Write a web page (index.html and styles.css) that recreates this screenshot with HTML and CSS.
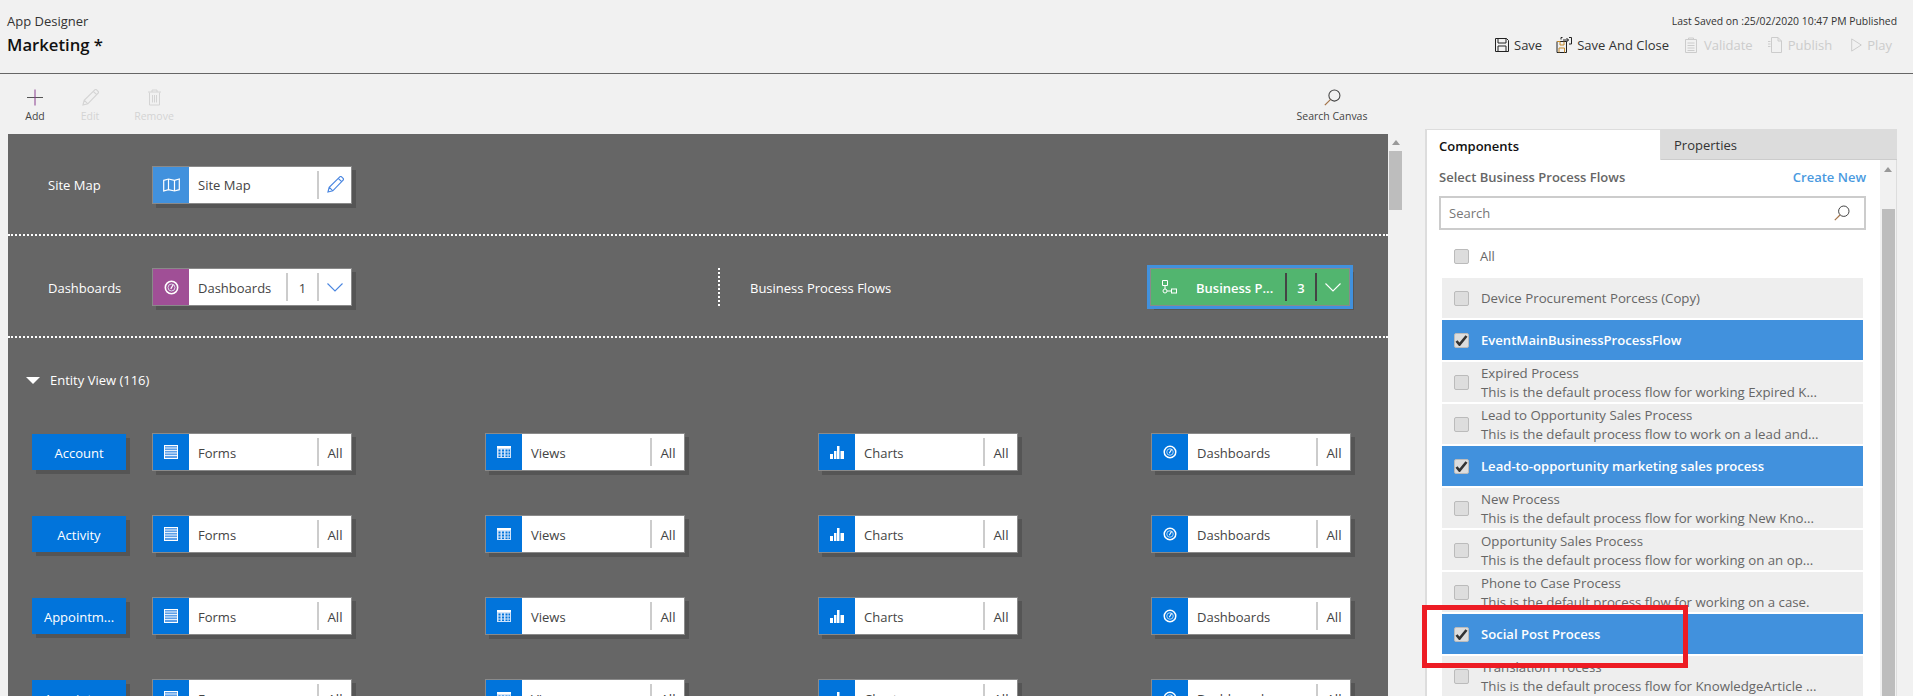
FILE: index.html
```html
<!DOCTYPE html>
<html lang="en">
<head>
<meta charset="utf-8">
<title>App Designer</title>
<link rel="stylesheet" href="styles.css">
</head>
<body>
<svg class="defs" width="0" height="0" aria-hidden="true">
  <symbol id="i-forms" viewBox="0 0 14 14"><rect x=".5" y=".5" width="13" height="13" fill="#5c9fe8" stroke="#fff"/><path d="M1 3h12M1 5.500h12M1 8h12M1 10.500h12" stroke="#e4f0fc" stroke-width="1"/></symbol>
  <symbol id="i-views" viewBox="0 0 14 12"><rect width="14" height="12" fill="#cfe3fa"/><rect y="0" width="14" height="2" fill="#fff"/><path d="M1.500 3.500h2v2h-2zM5 3.500h2v2H5zM8.500 3.500h2v2h-2zM11.500 3.500h1.500v2h-1.500zM1.500 6.500h2v2h-2zM5 6.500h2v2H5zM8.500 6.500h2v2h-2zM11.500 6.500h1.500v2h-1.500zM1.500 9.500h2v1.500h-2zM5 9.500h2v1.500H5zM8.500 9.500h2v1.500h-2zM11.500 9.500h1.500v1.500h-1.500z" fill="#0174db"/></symbol>
  <symbol id="i-charts" viewBox="0 0 14 13"><path d="M0 8h3v5H0zM4 5h2.500v8H4zM7 0h2.500v13H7zM10.500 5H14v8h-3.500z" fill="#fff"/></symbol>
  <symbol id="i-gauge" viewBox="0 0 16 16"><circle cx="8" cy="8" r="6.600" fill="none" stroke="#fff" stroke-width="1.700"/><circle cx="8" cy="8" r="3.700" fill="none" stroke="#e4eefb" stroke-width=".9"/><path d="M7.200 9.500l2.600-4.500" stroke="#fff" stroke-width="1.300"/></symbol>
  <symbol id="i-map" viewBox="0 0 17 14"><path d="M.7 2.300L5.500 1l6 1.300L16.300 1v10.700l-4.800 1.300-6-1.300L.7 13z" fill="none" stroke="#fff" stroke-width="1.200"/><path d="M5.500 1v10.700M11.500 2.300V13" stroke="#fff" stroke-width="1.200"/></symbol>
  <symbol id="i-pencil" viewBox="0 0 17 17"><path d="M1 16l1.200-4.800L12.800.9a1.300 1.300 0 0 1 1.800 0l1.500 1.500a1.300 1.300 0 0 1 0 1.800L5.800 14.800zM2.200 11.200l3.600 3.600M11.300 2.400l3.300 3.300" fill="none" stroke="currentColor" stroke-width="1.200"/></symbol>
  <symbol id="i-chev" viewBox="0 0 16 9"><path d="M.5.500L8 8l7.500-7.500" fill="none" stroke="currentColor" stroke-width="1.100"/></symbol>
  <symbol id="i-search" viewBox="0 0 16 16"><circle cx="9.800" cy="6.200" r="5.200" fill="none" stroke="#444" stroke-width="1"/><path d="M6 10L.8 15.200" stroke="#a4744a" stroke-width="1.200"/></symbol>
  <symbol id="i-check" viewBox="0 0 13 11"><path d="M1.500 6l3 3.600L11.500 1" fill="none" stroke="#333" stroke-width="2.600"/></symbol>
</svg>

<header class="topbar">
  <div class="title-block">
    <div class="app-name">App Designer</div>
    <div class="app-title">Marketing *</div>
  </div>
  <div class="status-block">
    <div class="last-saved">Last Saved on :25/02/2020 10:47 PM Published</div>
    <div class="actions">
      <span class="action act-save">
        <svg class="act-icon" width="14" height="14" viewBox="0 0 14 14"><path d="M.5.500h11l2 2v11H.5z" fill="none" stroke="#222"/><path d="M3 .5v4.500h8V.500M3 13.500V8h8v5.500" fill="none" stroke="#222"/></svg>
        Save
      </span>
      <span class="action act-close">
        <svg class="act-icon" width="16" height="16" viewBox="0 0 16 16"><path d="M1 4.500h9.500v11H1z" fill="none" stroke="#222"/><path d="M1 4.500h3v3.500h4V4.500M3 15.500v-4.500h5.500v4.500" fill="none" stroke="#c58a2b"/><path d="M5 2.500V.500h1.500M13 .500h2.500V7H13M7 3h5.500M10.500 1l2 2-2 2" fill="none" stroke="#222"/></svg>
        Save And Close
      </span>
      <span class="action action-off act-validate">
        <svg class="act-icon" width="12" height="16" viewBox="0 0 12 16"><path d="M.5 2.500h11v13H.5z" fill="none" stroke="#ccc"/><path d="M3.500 2.500V1h5v1.500M2.500 6h7M2.500 8.500h7M2.500 11h7M2.500 13.500h7" fill="none" stroke="#ccc"/></svg>
        Validate
      </span>
      <span class="action action-off act-publish">
        <svg class="act-icon" width="14" height="16" viewBox="0 0 14 16"><path d="M3.500 15.500V.500h6.500l3.500 3.500v11.500zM10 .5V4h3.500M0 4.500h2.500M0 7h2.500M0 9.500h2.500" fill="none" stroke="#ccc"/></svg>
        Publish
      </span>
      <span class="action action-off act-play">
        <svg class="act-icon" width="11" height="14" viewBox="0 0 11 14"><path d="M.7.900L10.300 7 .7 13.100z" fill="none" stroke="#ccc"/></svg>
        Play
      </span>
    </div>
  </div>
</header>

<div class="workspace">
  <div class="left">
    <div class="toolbar">
      <div class="tool tool-add">
        <svg width="16" height="16" viewBox="0 0 16 16"><path d="M0 8h16" stroke="#555"/><path d="M8 0v16" stroke="#8a3f8f"/></svg>
        <span>Add</span>
      </div>
      <div class="tool tool-off tool-edit">
        <svg width="17" height="17" viewBox="0 0 17 17" color="#d4d4d4"><use href="#i-pencil"/></svg>
        <span>Edit</span>
      </div>
      <div class="tool tool-off tool-remove">
        <svg width="13" height="16" viewBox="0 0 13 16"><path d="M1.500 3v12.500h10V3M0 2.500h13M4 2.500V.5h5v2M4.500 5.500v7.500M6.500 5.500v7.500M8.500 5.500v7.500" fill="none" stroke="#d4d4d4"/></svg>
        <span>Remove</span>
      </div>
      <div class="tool tool-search">
        <svg width="17" height="17"><use href="#i-search"/></svg>
        <span>Search Canvas</span>
      </div>
    </div>
    <div class="canvas-wrap">
      <main class="canvas">
        <section class="band band-site">
          <div class="band-label">Site Map</div>
          <div class="tile">
            <span class="tile-icon sky"><svg width="17" height="14"><use href="#i-map"/></svg></span>
            <span class="tile-name">Site Map</span>
            <span class="tile-sep"></span>
            <span class="tile-end tile-pencil"><svg width="17" height="17"><use href="#i-pencil"/></svg></span>
          </div>
        </section>
        <section class="band band-dash">
          <div class="band-label">Dashboards</div>
          <div class="tile">
            <span class="tile-icon plum"><svg width="15" height="15"><use href="#i-gauge"/></svg></span>
            <span class="tile-name">Dashboards</span>
            <span class="tile-sep"></span>
            <span class="tile-count">1</span>
            <span class="tile-sep"></span>
            <span class="tile-end tile-chev"><svg width="16" height="9"><use href="#i-chev"/></svg></span>
          </div>
          <div class="band-divider"></div>
          <div class="band-label bpf-label">Business Process Flows</div>
          <div class="tile tile-bpf">
            <span class="bpf-icon"><svg width="15" height="14" viewBox="0 0 15 14"><path d="M.5.500h5v5h-5zM3 5.500V9M5 11h4.500" fill="none" stroke="#fff"/><circle cx="3" cy="11" r="2" fill="none" stroke="#fff"/><rect x="9.500" y="9" width="5" height="4" fill="none" stroke="#fff"/></svg></span>
            <span class="bpf-name">Business P...</span>
            <span class="tile-sep dark"></span>
            <span class="bpf-count">3</span>
            <span class="tile-sep dark"></span>
            <span class="tile-end bpf-chev"><svg width="16" height="9"><use href="#i-chev"/></svg></span>
          </div>
        </section>
        <div class="entity-head"><span class="caret"></span>Entity View (116)</div>
        <div class="entity-grid">
          <div class="entity-btn">Account</div>
          <div class="tile"><span class="tile-icon blue"><svg width="14" height="14"><use href="#i-forms"/></svg></span><span class="tile-name">Forms</span><span class="tile-sep"></span><span class="tile-all">All</span></div>
          <div class="tile"><span class="tile-icon blue"><svg width="14" height="12"><use href="#i-views"/></svg></span><span class="tile-name">Views</span><span class="tile-sep"></span><span class="tile-all">All</span></div>
          <div class="tile"><span class="tile-icon blue"><svg width="14" height="13"><use href="#i-charts"/></svg></span><span class="tile-name">Charts</span><span class="tile-sep"></span><span class="tile-all">All</span></div>
          <div class="tile"><span class="tile-icon blue"><svg width="14" height="14"><use href="#i-gauge"/></svg></span><span class="tile-name">Dashboards</span><span class="tile-sep"></span><span class="tile-all">All</span></div>

          <div class="entity-btn">Activity</div>
          <div class="tile"><span class="tile-icon blue"><svg width="14" height="14"><use href="#i-forms"/></svg></span><span class="tile-name">Forms</span><span class="tile-sep"></span><span class="tile-all">All</span></div>
          <div class="tile"><span class="tile-icon blue"><svg width="14" height="12"><use href="#i-views"/></svg></span><span class="tile-name">Views</span><span class="tile-sep"></span><span class="tile-all">All</span></div>
          <div class="tile"><span class="tile-icon blue"><svg width="14" height="13"><use href="#i-charts"/></svg></span><span class="tile-name">Charts</span><span class="tile-sep"></span><span class="tile-all">All</span></div>
          <div class="tile"><span class="tile-icon blue"><svg width="14" height="14"><use href="#i-gauge"/></svg></span><span class="tile-name">Dashboards</span><span class="tile-sep"></span><span class="tile-all">All</span></div>

          <div class="entity-btn">Appointm...</div>
          <div class="tile"><span class="tile-icon blue"><svg width="14" height="14"><use href="#i-forms"/></svg></span><span class="tile-name">Forms</span><span class="tile-sep"></span><span class="tile-all">All</span></div>
          <div class="tile"><span class="tile-icon blue"><svg width="14" height="12"><use href="#i-views"/></svg></span><span class="tile-name">Views</span><span class="tile-sep"></span><span class="tile-all">All</span></div>
          <div class="tile"><span class="tile-icon blue"><svg width="14" height="13"><use href="#i-charts"/></svg></span><span class="tile-name">Charts</span><span class="tile-sep"></span><span class="tile-all">All</span></div>
          <div class="tile"><span class="tile-icon blue"><svg width="14" height="14"><use href="#i-gauge"/></svg></span><span class="tile-name">Dashboards</span><span class="tile-sep"></span><span class="tile-all">All</span></div>

          <div class="entity-btn">Appointm...</div>
          <div class="tile"><span class="tile-icon blue"><svg width="14" height="14"><use href="#i-forms"/></svg></span><span class="tile-name">Forms</span><span class="tile-sep"></span><span class="tile-all">All</span></div>
          <div class="tile"><span class="tile-icon blue"><svg width="14" height="12"><use href="#i-views"/></svg></span><span class="tile-name">Views</span><span class="tile-sep"></span><span class="tile-all">All</span></div>
          <div class="tile"><span class="tile-icon blue"><svg width="14" height="13"><use href="#i-charts"/></svg></span><span class="tile-name">Charts</span><span class="tile-sep"></span><span class="tile-all">All</span></div>
          <div class="tile"><span class="tile-icon blue"><svg width="14" height="14"><use href="#i-gauge"/></svg></span><span class="tile-name">Dashboards</span><span class="tile-sep"></span><span class="tile-all">All</span></div>
        </div>
      </main>
      <div class="vscroll canvas-scroll"><span class="arrow-up"></span><span class="thumb canvas-thumb"></span></div>
    </div>
  </div>

  <aside class="panel">
    <div class="tabs">
      <div class="tab tab-on">Components</div>
      <div class="tab">Properties</div>
    </div>
    <div class="panel-body">
      <div class="panel-content">
        <div class="panel-head">
          <span class="panel-title">Select Business Process Flows</span>
          <span class="create-new">Create New</span>
        </div>
        <div class="search">
          <span>Search</span>
          <svg width="16" height="16"><use href="#i-search"/></svg>
        </div>
        <label class="all-row"><span class="box"></span><span>All</span></label>
        <div class="list">
          <div class="row"><span class="box"></span><div class="row-text"><div>Device Procurement Porcess (Copy)</div></div></div>
          <div class="row row-on"><span class="box"><svg width="13" height="11"><use href="#i-check"/></svg></span><div class="row-text"><div>EventMainBusinessProcessFlow</div></div></div>
          <div class="row"><span class="box"></span><div class="row-text"><div>Expired Process</div><div class="row-desc">This is the default process flow for working Expired K...</div></div></div>
          <div class="row"><span class="box"></span><div class="row-text"><div>Lead to Opportunity Sales Process</div><div class="row-desc">This is the default process flow to work on a lead and...</div></div></div>
          <div class="row row-on"><span class="box"><svg width="13" height="11"><use href="#i-check"/></svg></span><div class="row-text"><div>Lead-to-opportunity marketing sales process</div></div></div>
          <div class="row"><span class="box"></span><div class="row-text"><div>New Process</div><div class="row-desc">This is the default process flow for working New Kno...</div></div></div>
          <div class="row"><span class="box"></span><div class="row-text"><div>Opportunity Sales Process</div><div class="row-desc">This is the default process flow for working on an op...</div></div></div>
          <div class="row"><span class="box"></span><div class="row-text"><div>Phone to Case Process</div><div class="row-desc">This is the default process flow for working on a case.</div></div></div>
          <div class="row row-on"><span class="box"><svg width="13" height="11"><use href="#i-check"/></svg></span><div class="row-text"><div>Social Post Process</div></div></div>
          <div class="row"><span class="box"></span><div class="row-text"><div>Translation Process</div><div class="row-desc">This is the default process flow for KnowledgeArticle ...</div></div></div>
        </div>
      </div>
      <div class="vscroll panel-scroll"><span class="arrow-up"></span><span class="thumb panel-thumb"></span></div>
    </div>
    <div class="callout"></div>
  </aside>
</div>
</body>
</html>
```
FILE: styles.css
```css
* { box-sizing: border-box; }
html, body { margin: 0; height: 696px; overflow: hidden; }
body {
  background: #f1f1f1;
  color: #333;
  font-family: "Open Sans", "Noto Sans", "Liberation Sans", sans-serif;
  font-size: 13px;
  position: relative;
}
.defs { position: absolute; }
svg { display: block; flex: none; }

/* header */
.topbar {
  height: 74px;
  border-bottom: 1px solid #666;
  display: flex;
  justify-content: space-between;
  padding: 12px 16px 0 7px;
}
.app-name { font-size: 13px; line-height: 18px; color: #333; }
.app-title { font-size: 16.7px; line-height: 24px; margin-top: 3px; color: #111; font-weight: 600; }
.status-block { display: flex; flex-direction: column; align-items: flex-end; }
.last-saved { font-size: 10.4px; line-height: 18px; color: #333; }
.actions { display: flex; margin: 5px 5px 0 0; line-height: 20px; }
.action { display: flex; align-items: center; gap: 5px; color: #333; }
.action-off { color: #ccc; }
.act-close { margin-left: 14px; }
.act-validate { margin-left: 16px; gap: 7px; }
.act-publish { margin-left: 15px; gap: 6px; }
.act-play { margin-left: 19px; }

/* workspace */
.workspace { display: flex; height: 622px; }
.left { width: 1425px; flex: none; }

.toolbar { height: 60px; display: flex; padding: 15px 0 0 0; }
.tool { display: flex; flex-direction: column; align-items: center; font-size: 10.5px; line-height: 14px; color: #444; }
.tool svg { height: 17px; margin-bottom: 3px; }
.tool-off { color: #d4d4d4; }
.tool-add { width: 70px; }
.tool-edit { width: 40px; }
.tool-remove { width: 88px; }
.tool-search { margin-left: auto; width: 100px; margin-right: 43px; }

.canvas-wrap { display: flex; height: 562px; padding-left: 8px; }
.canvas { width: 1380px; background: #666; color: #fff; overflow: hidden; flex: none; }
.vscroll { display: flex; flex-direction: column; align-items: center; }
.canvas-scroll { width: 17px; padding: 6px 4px 0 2px; }
.arrow-up { width: 0; height: 0; border: 4px solid transparent; border-top: 0; border-bottom: 5px solid #999; }
.thumb { background: #bdbdbd; display: block; }
.canvas-thumb { width: 13px; height: 59px; margin-top: 6px; }

/* canvas bands */
.band { display: flex; align-items: center; border-bottom: 2px dotted #fff; padding-left: 40px; }
.band-site { height: 102px; padding-top: 1px; }
.band-dash { height: 102px; padding-top: 2px; }
.band-label { width: 104px; flex: none; padding-top: 1px; }
.band-divider { width: 2px; height: 38px; border-left: 2px dotted #fff; margin-left: 366px; }
.bpf-label { width: auto; margin-left: 30px; }

.tile {
  width: 200px;
  height: 38px;
  background: #fff;
  border: 1px solid #8a8a8a;
  box-shadow: 4px 4px 0 #555;
  display: flex;
  align-items: center;
  color: #444;
}
.tile-icon { width: 36px; height: 36px; display: flex; align-items: center; justify-content: center; flex: none; }
.sky { background: #4191dd; }
.plum { background: #a04f96; }
.blue { background: #0174db; }
.tile-name { margin-left: 9px; flex: 1; white-space: nowrap; padding-top: 1px; }
.tile-sep { width: 2px; height: 28px; background: #ccc; flex: none; }
.tile-count { width: 29px; text-align: center; flex: none; padding-top: 1px; }
.tile-end { width: 32px; display: flex; justify-content: center; flex: none; }
.tile-pencil, .tile-chev { color: #4a86e0; }
.tile-all { width: 32px; text-align: center; flex: none; padding-top: 1px; font-size: 13.4px; }

.tile-bpf {
  margin-left: auto;
  margin-right: 38px;
  background: #52b56f;
  outline: 3px solid #4191dd;
  color: #fff;
  font-weight: 600;
}
.bpf-icon { width: 36px; display: flex; justify-content: center; flex: none; }
.bpf-name { margin-left: 9px; flex: 1; white-space: nowrap; padding-top: 1px; }
.tile-sep.dark { background: #444; height: 28px; }
.bpf-count { width: 28px; text-align: center; flex: none; padding-top: 1px; }
.bpf-chev { color: #fff; }

.entity-head { display: flex; align-items: center; height: 20px; margin-top: 32px; padding-left: 18px; }
.caret { width: 0; height: 0; border: 7px solid transparent; border-top: 7px solid #fff; border-bottom: 0; margin-right: 10px; }

.entity-grid {
  display: grid;
  grid-template-columns: 120px repeat(4, 333px);
  grid-auto-rows: 38px;
  row-gap: 44px;
  padding: 43px 0 0 24px;
  align-items: center;
}
.entity-btn {
  width: 94px;
  height: 36px;
  background: #0174db;
  box-shadow: 4px 4px 0 #555;
  display: flex;
  align-items: center;
  justify-content: center;
  color: #fff;
  white-space: nowrap;
  padding-top: 1px;
}

/* right panel */
.panel { width: 472px; margin-top: 55px; flex: none; display: flex; flex-direction: column; height: 567px; position: relative; }
.tabs { display: flex; height: 31px; flex: none; }
.tab {
  flex: 1;
  background: #dcdcdc;
  padding: 7px 0 0 13px;
  line-height: 19px;
  color: #333;
  border-bottom: 1px solid #ccc;
}
.tab-on {
  flex: none;
  width: 236px;
  background: #fff;
  border: 1px solid #ddd;
  border-bottom: 0;
  border-left-width: 2px;
  color: #111;
  font-weight: 600;
  padding-left: 12px;
}
.panel-body {
  flex: 1;
  display: flex;
  background: #fff;
  border-left: 2px solid #ddd;
  border-right: 1px solid #ddd;
  min-height: 0;
}
.panel-content { width: 453px; flex: none; padding: 0 14px 0 12px; overflow: hidden; color: #666; }
.panel-head { height: 36px; display: flex; align-items: center; justify-content: space-between; padding-bottom: 2px; }
.panel-title { font-weight: 600; color: #666; font-size: 13px; }
.create-new { color: #4a9ae0; font-weight: 600; font-size: 13px; }
.search {
  height: 34px;
  border: 2px solid #ccc;
  display: flex;
  align-items: center;
  justify-content: space-between;
  padding: 0 14px 0 8px;
  color: #777;
}
.all-row { display: flex; align-items: center; height: 48px; padding: 4px 0 0 15px; gap: 11px; }
.list { display: flex; flex-direction: column; gap: 2px; margin: 0 3px; }
.row { height: 40px; background: #eee; display: flex; align-items: center; padding-left: 12px; flex: none; font-weight: 500; }
.row-on { background: #4191dd; color: #fff; font-weight: 600; }
.row-text { margin-left: 12px; line-height: 19px; white-space: nowrap; padding-top: 1px; font-size: 13.25px; }
.row-on .row-text { font-size: 13.1px; }
.row-desc { font-weight: 400; }
.box {
  width: 15px;
  height: 15px;
  background: #ddd;
  border: 1px solid #bbb;
  border-radius: 2px;
  display: flex;
  align-items: center;
  justify-content: center;
  flex: none;
}
.panel-scroll { width: 16px; background: #f1f1f1; padding-top: 7px; }
.panel-thumb { width: 13px; height: 600px; margin-top: 37px; }

.callout {
  position: absolute;
  left: -3px;
  top: 476px;
  width: 266px;
  height: 63px;
  border: 5px solid #ed1c24;
  pointer-events: none;
}
```
